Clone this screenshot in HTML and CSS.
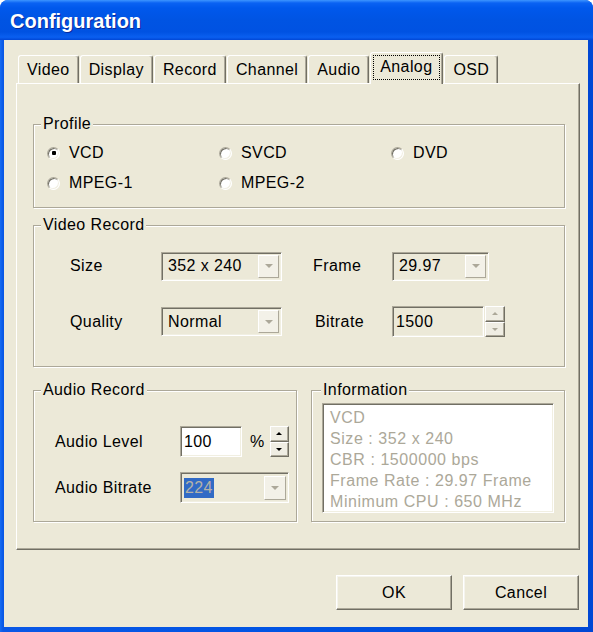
FILE: index.html
```html
<!DOCTYPE html>
<html>
<head>
<meta charset="utf-8">
<title>Configuration</title>
<link rel="stylesheet" href="styles.css">
</head>
<body>
<div class="window">
  <div class="titlebar"><span class="title">Configuration</span></div>
  <div class="client">
    <div class="tabs">
      <div class="tab">Video</div>
      <div class="tab">Display</div>
      <div class="tab">Record</div>
      <div class="tab">Channel</div>
      <div class="tab">Audio</div>
      <div class="tab active"><span class="focus">Analog</span></div>
      <div class="tab">OSD</div>
    </div>
    <div class="panel">
      <fieldset class="group profile">
        <legend>Profile</legend>
        <div class="radio-grid">
          <label class="radio"><span class="radio-box"><span class="radio-dot"></span></span>VCD</label>
          <label class="radio"><span class="radio-box"></span>SVCD</label>
          <label class="radio"><span class="radio-box"></span>DVD</label>
          <label class="radio"><span class="radio-box"></span>MPEG-1</label>
          <label class="radio"><span class="radio-box"></span>MPEG-2</label>
        </div>
      </fieldset>

      <fieldset class="group video">
        <legend>Video Record</legend>
        <div class="vr-grid">
          <span class="label">Size</span>
          <div class="combo combo-size"><span class="combo-text">352 x 240</span><span class="drop"><i class="arrow"></i></span></div>
          <span class="label">Frame</span>
          <div class="combo combo-frame"><span class="combo-text">29.97</span><span class="drop"><i class="arrow"></i></span></div>

          <span class="label">Quality</span>
          <div class="combo combo-size"><span class="combo-text">Normal</span><span class="drop"><i class="arrow"></i></span></div>
          <span class="label label-bitrate">Bitrate</span>
          <div class="spin-edit">
            <div class="edit edit-bitrate">1500</div>
            <div class="spin spin-disabled">
              <span class="spin-btn"><i class="up"></i></span>
              <span class="spin-btn"><i class="down"></i></span>
            </div>
          </div>
        </div>
      </fieldset>

      <div class="bottom-row">
        <fieldset class="group audio">
          <legend>Audio Record</legend>
          <div class="ar-grid">
            <span class="label">Audio Level</span>
            <div class="level-row">
              <div class="edit edit-level">100</div>
              <span class="pct">%</span>
              <div class="spin spin-level">
                <span class="spin-btn"><i class="up"></i></span>
                <span class="spin-btn"><i class="down"></i></span>
              </div>
            </div>
            <span class="label">Audio Bitrate</span>
            <div class="combo combo-abr"><span class="combo-text"><span class="sel">224</span></span><span class="drop"><i class="arrow"></i></span></div>
          </div>
        </fieldset>

        <fieldset class="group info">
          <legend>Information</legend>
          <div class="listbox">
            <div class="line">VCD</div>
            <div class="line">Size : 352 x 240</div>
            <div class="line">CBR : 1500000 bps</div>
            <div class="line">Frame Rate : 29.97 Frame</div>
            <div class="line">Minimum CPU : 650 MHz</div>
          </div>
        </fieldset>
      </div>
    </div>
    <div class="buttons">
      <button class="btn">OK</button>
      <button class="btn">Cancel</button>
    </div>
  </div>
</div>
</body>
</html>
```

FILE: styles.css
```css
* { box-sizing: border-box; }
html, body { margin: 0; padding: 0; }
body {
  width: 593px;
  height: 632px;
  overflow: hidden;
  background: #ffffff;
  font-family: "Liberation Sans", Arial, sans-serif;
  font-size: 16px;
  letter-spacing: 0.4px;
  color: #000;
}

.window {
  width: 593px;
  height: 632px;
  display: flex;
  flex-direction: column;
  background: linear-gradient(to right, #166cf2 0, #0a58e6 3px, #0054e3 50%, #0047d4 100%);
  border-radius: 8px 8px 0 0;
  overflow: hidden;
}

.titlebar {
  flex: none;
  height: 40px;
  display: flex;
  align-items: center;
  padding-left: 10px;
  background: linear-gradient(to bottom, #3d95ff 0, #0a62f3 3px, #0058ec 8px, #0054e3 50%, #0052e2 80%, #0a5ff0 93%, #0047d6 100%);
}
.title {
  color: #fff;
  font-weight: bold;
  font-size: 20px;
  letter-spacing: 0;
  text-shadow: 1px 1px 0 #0b2a9c;
  margin-top: 2px;
}

.client {
  flex: 1;
  margin: 0 5px 5px 4px;
  background: #ece9d8;
  padding: 12px 8px 0 12px;
  display: flex;
  flex-direction: column;
}

/* Tabs */
.tabs {
  display: flex;
  align-items: flex-end;
  height: 31px;
  padding-left: 2px;
}
.tab {
  position: relative;
  height: 28px;
  margin-right: 1px;
  padding: 0 8px;
  display: flex;
  align-items: center;
  background: #ece9d8;
  border-top: 1px solid #fff;
  border-left: 1px solid #fff;
  border-right: 1px solid #716f64;
  box-shadow: inset -1px 0 0 #aca899;
  border-radius: 3px 3px 0 0;
  white-space: nowrap;
}
.tab.active {
  height: 32px;
  margin-bottom: -1px;
  padding: 0 2px 2px 2px;
  z-index: 1;
}
.focus {
  border: 1px dotted #000;
  padding: 2px 7px 3px 6px;
}

/* Panel */
.panel {
  border-top: 1px solid #fff;
  border-left: 1px solid #fff;
  border-right: 1px solid #716f64;
  border-bottom: 1px solid #716f64;
  box-shadow: inset -1px -1px 0 #aca899;
  padding: 0 14px 27px 16px;
}

.group {
  margin: 0;
  padding: 0;
  min-width: 0;
  border: 1px solid #aca899;
  box-shadow: 1px 1px 0 #fff, inset 1px 1px 0 #fff;
}
.group legend {
  margin-left: 7px;
  padding: 0 2px;
  line-height: 18px;
  height: 18px;
  background: #ece9d8;
}
.profile { margin-top: 31px; }
.video { margin-top: 8px; }

/* Radios */
.radio-grid {
  display: grid;
  grid-template-columns: repeat(3, 172px);
  row-gap: 12px;
  padding: 11px 0 15px 13px;
}
.radio {
  display: flex;
  align-items: center;
  height: 18px;
  line-height: 18px;
}
.radio-box {
  width: 13px;
  height: 13px;
  margin-right: 9px;
  border-radius: 50%;
  background: #fff;
  border: 1px solid;
  border-color: #aca899 #fff #fff #aca899;
  box-shadow: inset 1px 1px 0 #716f64, inset -1px -1px 0 #f1efe2;
  display: flex;
  align-items: center;
  justify-content: center;
}
.radio-dot {
  width: 4px;
  height: 4px;
  border-radius: 1px;
  background: #000;
}

/* Video record grid */
.vr-grid {
  display: grid;
  grid-template-columns: 91px 152px 79px auto;
  grid-template-rows: 30px 31px;
  row-gap: 25px;
  align-items: center;
  padding: 17px 0 29px 36px;
}
.label { line-height: 18px; white-space: nowrap; }
.label-bitrate { padding-left: 2px; }

.combo {
  display: flex;
  align-items: stretch;
  justify-content: space-between;
  height: 29px;
  border: 1px solid;
  border-color: #aca899 #fff #fff #aca899;
  box-shadow: inset 1px 1px 0 #716f64, inset -1px -1px 0 #f1efe2;
  padding: 2px 2px 2px 6px;
  background: #ece9d8;
}
.combo-size { width: 121px; }
.combo-frame { width: 97px; }
.combo-text {
  display: flex;
  align-items: center;
  white-space: nowrap;
}
.drop {
  width: 21px;
  background: #f3f1e8;
  border: 1px solid;
  border-color: #fff #aca899 #aca899 #fff;
  display: flex;
  align-items: center;
  justify-content: center;
}
.arrow {
  width: 0;
  height: 0;
  border-left: 4px solid transparent;
  border-right: 4px solid transparent;
  border-top: 4px solid #aca899;
}

.spin-edit {
  display: flex;
  height: 31px;
  width: 113px;
}
.edit {
  height: 31px;
  border: 1px solid;
  border-color: #aca899 #fff #fff #aca899;
  box-shadow: inset 1px 1px 0 #716f64, inset -1px -1px 0 #f1efe2;
  padding: 0 3px;
  display: flex;
  align-items: center;
}
.edit-bitrate { width: 92px; background: #ece9d8; margin-right: 1px; }
.edit-level { width: 62px; background: #fff; }

.spin {
  display: flex;
  flex-direction: column;
  width: 20px;
  height: 31px;
}
.spin-btn {
  flex: 1;
  display: flex;
  align-items: center;
  justify-content: center;
  background: #efede3;
  border: 1px solid;
  border-color: #fff #716f64 #716f64 #fff;
  box-shadow: inset -1px -1px 0 #aca899;
}
.up, .down {
  width: 0;
  height: 0;
  border-left: 3px solid transparent;
  border-right: 3px solid transparent;
}
.up { border-bottom: 3px solid #000; }
.down { border-top: 3px solid #000; }
.spin-disabled .up { border-bottom-color: #aca899; }
.spin-disabled .down { border-top-color: #aca899; }

/* Bottom row */
.bottom-row {
  display: flex;
  gap: 14px;
  margin-top: 14px;
}
.audio { width: 264px; flex: none; }
.info { flex: 1; }
.info legend { margin-left: 9px; }

.ar-grid {
  display: grid;
  grid-template-columns: 125px auto;
  grid-template-rows: 31px 31px;
  row-gap: 15px;
  align-items: center;
  padding: 27px 0 17px 21px;
}
.level-row {
  display: flex;
  align-items: center;
  height: 31px;
}
.pct { margin-left: 8px; margin-right: 5px; }
.spin-level { width: 19px; }

.combo-abr {
  width: 109px;
  height: 31px;
  padding: 3px 2px 2px 3px;
  background: #ece9d8;
}
.sel {
  background: #316ac5;
  color: #b4b2a8;
  line-height: 20px;
  padding: 0 1px 0 1px;
}
.combo-abr .drop { width: 22px; }

.listbox {
  margin: 4px 10px 8px 10px;
  height: 110px;
  background: #fff;
  border: 1px solid;
  border-color: #aca899 #fff #fff #aca899;
  box-shadow: inset 1px 1px 0 #716f64, inset -1px -1px 0 #f1efe2;
  padding: 3px 6px 0 7px;
  color: #aca899;
  letter-spacing: 0.55px;
}
.line {
  line-height: 21px;
  height: 21px;
  white-space: nowrap;
}

/* Buttons */
.buttons {
  display: flex;
  justify-content: flex-end;
  gap: 11px;
  margin-top: 25px;
  padding-right: 1px;
}
.btn {
  width: 116px;
  height: 35px;
  font: inherit;
  letter-spacing: 0.4px;
  color: #000;
  background: #ece9d8;
  border: 1px solid;
  border-color: #fff #716f64 #716f64 #fff;
  box-shadow: inset -1px -1px 0 #aca899, inset 1px 1px 0 #f5f4ee;
  padding: 0;
}
```
